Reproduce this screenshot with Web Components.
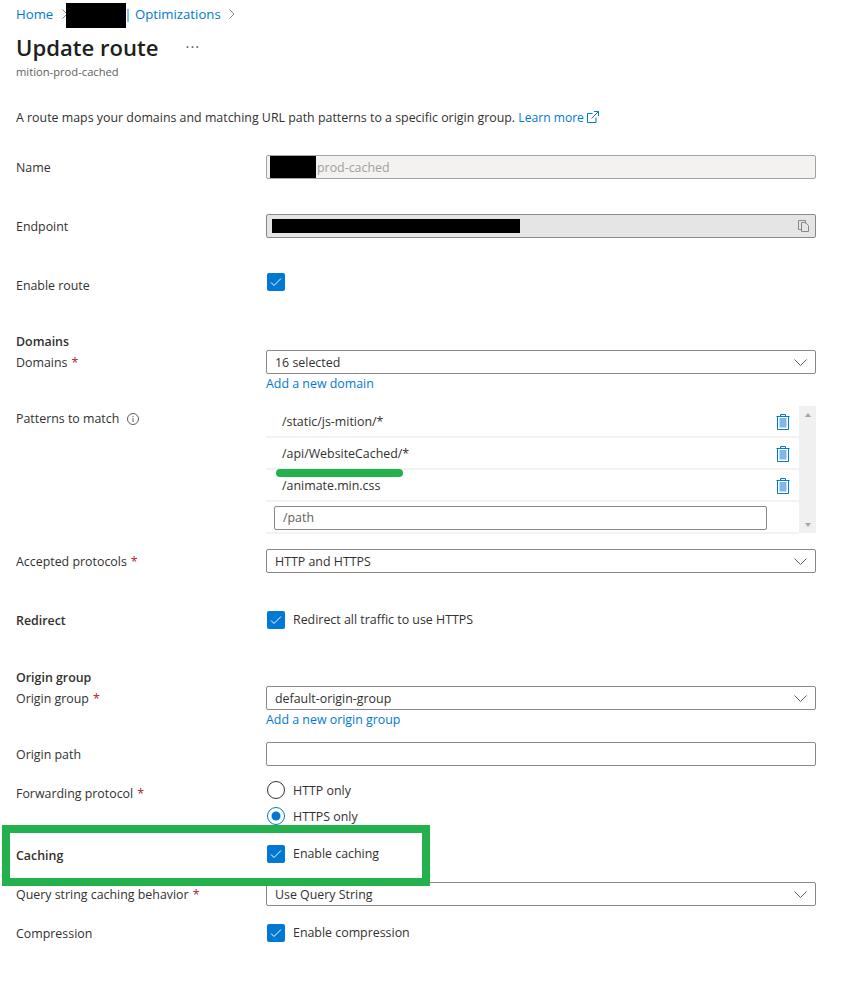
<!DOCTYPE html>
<html>
<head>
<meta charset="utf-8">
<style>
  html, body { margin: 0; padding: 0; background: #fff; }
  body { font: 12.4px/18px "Open Sans", "Liberation Sans", sans-serif; color: #323130; position: relative; height: 1000px; overflow: hidden; }
  main { width: 816px; padding-left: 16px; box-sizing: content-box; }
</style>
</head>
<body>
<main>
  <az-breadcrumb>
    <a-link>Home</a-link>
    <az-chevron></az-chevron>
    <az-redact style="--w:60px;--h:25px;--ml:-2px;--mr:-2px;align-self:flex-end;margin-bottom:-1px"></az-redact>
    <a-link>| Optimizations</a-link>
    <az-chevron></az-chevron>
  </az-breadcrumb>
  <az-title sub="mition-prod-cached">Update route</az-title>
  <az-intro>A route maps your domains and matching URL path patterns to a specific origin group. <a-link style="font-size:12.100px">Learn more</a-link>
    <svg width="12" height="12" viewBox="0 0 12 12" fill="none" stroke="#0078d4" style="margin-left:0;vertical-align:-1px"><path d="M5.500 2.500H.5v9h8.500V6.500"/><path d="M4.500 7.500L11.500.5M7 .5h4.500V5"/></svg>
  </az-intro>

  <az-row style="--top:28px" label="Name">
    <az-input variant="disabled"><az-redact style="--w:46px;--h:22px;--ml:-5px;--mr:1px"></az-redact><az-text style="color:#a19f9d">prod-cached</az-text></az-input>
  </az-row>
  <az-row style="--top:35px" label="Endpoint">
    <az-input variant="readonly"><az-redact style="--w:248px;--h:14px;--ml:-3px"></az-redact>
      <svg slot="end" width="11" height="12" viewBox="0 0 11 12" fill="none" stroke="#8a8886"><path d="M7.500 3.500V.5H.5v9h3"/><path d="M3.500 2.500h4l3 3v6h-7z"/></svg>
    </az-input>
  </az-row>
  <az-row style="--top:35px" label="Enable route"><az-check></az-check></az-row>

  <az-heading style="--top:35px">Domains</az-heading>
  <az-row label="Domains" required>
    <az-select>16 selected</az-select>
    <a-link style="display:block;line-height:20px;height:18px">Add a new domain</a-link>
  </az-row>
  <az-row style="--top:14px" label="Patterns to match" info>
    <az-patterns>
      <az-pattern>/static/js-mition/*</az-pattern>
      <az-pattern>/api/WebsiteCached/*</az-pattern>
      <az-pattern>/animate.min.css</az-pattern>
    </az-patterns>
  </az-row>
  <az-row style="--top:15px" label="Accepted protocols" required><az-select>HTTP and HTTPS</az-select></az-row>
  <az-row style="--top:35px;--pad:3px" label="Redirect" bold><az-check>Redirect all traffic to use HTTPS</az-check></az-row>

  <az-heading style="--top:36px">Origin group</az-heading>
  <az-row label="Origin group" required>
    <az-select>default-origin-group</az-select>
    <a-link style="display:block;line-height:20px;height:18px">Add a new origin group</a-link>
  </az-row>
  <az-row style="--top:14px" label="Origin path"><az-input></az-input></az-row>
  <az-row style="--top:15px" label="Forwarding protocol" required>
    <az-radio>HTTP only</az-radio>
    <az-radio checked style="margin-top:8px">HTTPS only</az-radio>
  </az-row>
  <az-row style="--top:18px;--pad:2px" label="Caching" bold><az-check>Enable caching</az-check></az-row>
  <az-row style="--top:15px" label="Query string caching behavior" required><az-select>Use Query String</az-select></az-row>
  <az-row style="--top:15px;--pad:3px" label="Compression"><az-check>Enable compression</az-check></az-row>
</main>
<az-highlight></az-highlight>

<script>
function define(name, css, html) {
  class El extends HTMLElement {
    constructor() {
      super();
      const shadow = this.attachShadow({mode: "open"});
      shadow.innerHTML = `<style>${css}</style>` + (typeof html === "function" ? html(this) : html);
    }
  }
  customElements.define(name, El);
}

define("a-link", `:host{color:#0078d4;white-space:nowrap}`, `<slot></slot>`);

define("az-text", `:host{display:block;padding-top:2px;line-height:18px}`, `<slot></slot>`);

define("az-chevron", `:host{display:inline-flex;align-items:center}`,
  `<svg width="6" height="10" viewBox="0 0 6 10" fill="none" stroke="#8a8886"><path d="M.5.5L5 5 .5 9.500"/></svg>`);

define("az-redact",
  `:host{display:inline-block;background:#000;width:var(--w);height:var(--h);margin-left:var(--ml,0);margin-right:var(--mr,0);flex:none}`, ``);

define("az-breadcrumb",
  `:host{display:flex;align-items:center;height:29px;box-sizing:border-box;padding-bottom:2px;font-size:13.200px;line-height:18px}
   ::slotted(az-chevron){margin:0 0 0 9px}
   ::slotted(az-chevron:last-child){margin-left:8px}`,
  `<slot></slot>`);

define("az-title",
  `:host{display:block}
   .top{display:flex;align-items:center;height:38px;margin-top:-1px;margin-bottom:1px}
   h1{margin:0;font-size:22.100px;line-height:38px;font-weight:600;color:#201f1e}
   .more{margin-left:27px;font-size:15px;letter-spacing:1px;color:#605e5c;line-height:12px;margin-top:-3px}
   .sub{font-size:11.200px;line-height:16px;color:#605e5c;margin-top:-3px}`,
  el => `<div class="top"><h1><slot></slot></h1><span class="more">···</span></div><div class="sub">${el.getAttribute("sub")}</div>`);

define("az-intro", `:host{display:block;margin-top:29px;line-height:18px;white-space:nowrap}`, `<slot></slot>`);

define("az-heading",
  `:host{display:block;font-weight:600;line-height:20px;height:18px;margin-top:var(--top,0)}`, `<slot></slot>`);

define("az-row",
  `:host{display:grid;grid-template-columns:250px 550px;margin-top:var(--top,0)}
   .label{height:24px;box-sizing:border-box;padding-top:2px;display:flex;align-items:center;white-space:nowrap}
   .bold{font-weight:600}
   .req{color:#a4262c;margin-left:4px}
   .info{margin-left:8px;display:inline-flex}
   .control{min-width:0;padding-top:var(--pad,0)}`,
  el => `<div class="label ${el.hasAttribute("bold") ? "bold" : ""}">${el.getAttribute("label")}` +
    (el.hasAttribute("required") ? `<span class="req">*</span>` : "") +
    (el.hasAttribute("info") ? `<span class="info"><svg width="12" height="12" viewBox="0 0 12 12" fill="none" stroke="#605e5c"><circle cx="6" cy="6" r="5.500"/><path d="M6 5v4M6 3v1.200"/></svg></span>` : "") +
    `</div><div class="control"><slot></slot></div>`);

define("az-input",
  `:host{display:flex;align-items:center;height:24px;box-sizing:border-box;border:1px solid #8a8886;border-radius:2px;padding:0 6px 0 8px;background:#fff;overflow:hidden}
   :host([variant=disabled]){background:#f3f2f1;border-color:#a3a3a3}
   :host([variant=readonly]){background:#e5e5e5}
   .main{flex:1;display:flex;align-items:center;min-width:0;white-space:nowrap}
   slot[name=end]{display:inline-flex}`,
  `<div class="main"><slot></slot></div><slot name="end"></slot>`);

define("az-select",
  `:host{display:flex;align-items:center;justify-content:space-between;height:24px;box-sizing:border-box;border:1px solid #8a8886;border-radius:2px;padding:0 8px;background:#fff;white-space:nowrap}
   .t{padding-top:2px}
   svg{flex:none}`,
  `<span class="t"><slot></slot></span><svg width="13" height="7" viewBox="0 0 13 7" fill="none" stroke="#605e5c"><path d="M.5.5l6 6 6-6"/></svg>`);

define("az-check",
  `:host{display:flex;align-items:center;height:18px;white-space:nowrap}
   .box{width:18px;height:18px;border-radius:2px;background:#0078d4;display:flex;align-items:center;justify-content:center;margin-left:1px;flex:none}
   .text{margin-left:8px;line-height:18px;margin-top:-1px}`,
  `<span class="box"><svg width="12" height="10" viewBox="0 0 12 10" fill="none" stroke="#fff"><path d="M1 5.500L4 8.500 11 1.500"/></svg></span><span class="text"><slot></slot></span>`);

define("az-radio",
  `:host{display:flex;align-items:center;height:18px;white-space:nowrap}
   svg{margin-left:1px;flex:none}
   .text{margin-left:8px;padding-top:1px}`,
  el => `<svg width="18" height="18" viewBox="0 0 18 18">` +
    (el.hasAttribute("checked")
      ? `<circle cx="9" cy="9" r="8.500" fill="#fff" stroke="#0078d4"/><circle cx="9" cy="9" r="4.500" fill="#0078d4"/>`
      : `<circle cx="9" cy="9" r="8.500" fill="#fff" stroke="#323130"/>`) +
    `</svg><span class="text"><slot></slot></span>`);

define("az-pattern",
  `:host{display:flex;align-items:center;justify-content:space-between;height:32px;box-sizing:border-box;border-bottom:2px solid #f3f2f1;padding:2px 9px 0 16px;white-space:nowrap}`,
  `<slot></slot><svg width="14" height="16" viewBox="0 0 14 16" fill="none"><rect x="3.500" y="4" width="7" height="9.500" fill="#7db8e8"/><path d="M.5 2.500h13M4.500 2.500V.5h5v2M1.500 2.500v13h11v-13" stroke="#0078d4"/></svg>`);

define("az-patterns",
  `:host{display:flex;height:128px;position:relative}
   .list{flex:1;min-width:0}
   .last{height:32px;box-sizing:border-box;border-bottom:2px solid #f3f2f1;padding:4px 32px 0 8px}
   .bar{width:17px;background:#f0f0f0;height:127px;display:flex;flex-direction:column;justify-content:space-between;align-items:center;padding:7px 0 6px;box-sizing:border-box}
   .up{border:3.500px solid transparent;border-top:0;border-bottom:4px solid #a6a6a6;width:0;height:0}
   .down{border:3.500px solid transparent;border-bottom:0;border-top:4px solid #a6a6a6;width:0;height:0}
   .mark{position:absolute;left:10px;top:63px;width:127px;height:8px;border-radius:4px;background:#22b14c}`,
  `<div class="list"><slot></slot><div class="last"><az-input style="color:#605e5c"><az-text style="padding-top:0">/path</az-text></az-input></div></div>
   <div class="bar"><span class="up"></span><span class="down"></span></div><span class="mark"></span>`);

define("az-highlight",
  `:host{position:absolute;left:2px;top:825px;width:428px;height:61px;box-sizing:border-box;border:8px solid #22b14c;pointer-events:none}`, ``);
</script>
</body>
</html>
